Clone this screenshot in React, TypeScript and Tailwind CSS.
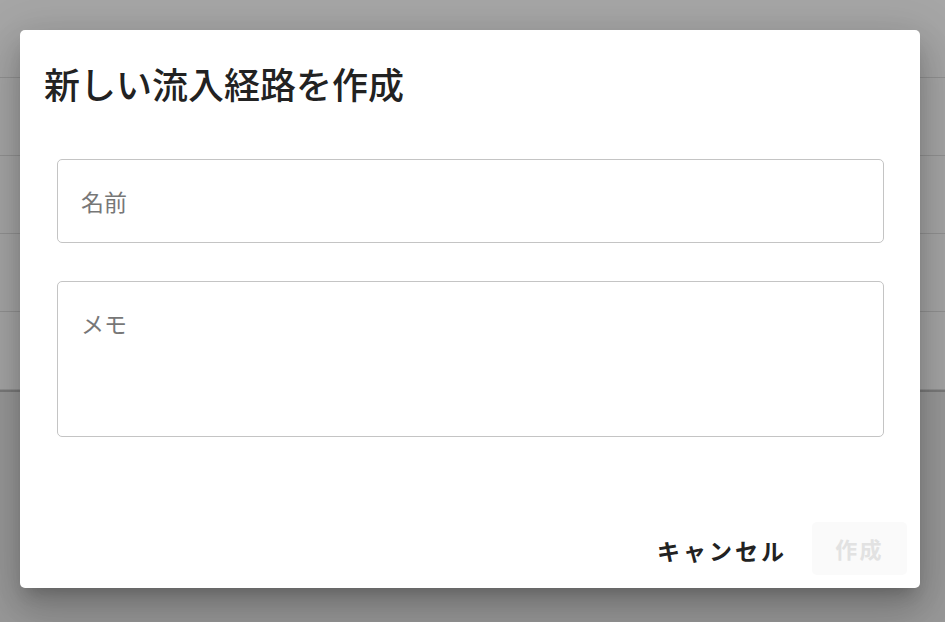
import React from "react";

export default function App() {
  const rows = [0, 1, 2, 3, 4];
  return (
    <div
      className="relative h-[622px] w-[945px] overflow-hidden bg-[#ececec]"
      style={{ fontFamily: '"Noto Sans CJK JP", "Noto Sans", sans-serif' }}
    >
      {/* underlying page */}
      <div className="flex flex-col bg-white">
        {rows.map((r) => (
          <div key={r} className="h-[78px] border-b border-[#e0e0e0]" />
        ))}
        <div className="h-[2px] bg-[#bdbdbd]" />
      </div>

      {/* backdrop */}
      <div className="absolute inset-0 bg-black/[0.35]" />

      {/* dialog */}
      <div className="absolute left-[20px] top-[30px] flex h-[558px] w-[900px] flex-col rounded-[5px] bg-white shadow-[0px_11px_15px_-7px_rgba(0,0,0,0.2),0px_24px_38px_3px_rgba(0,0,0,0.14),0px_9px_46px_8px_rgba(0,0,0,0.12)]">
        <h2 className="px-6 pt-[26px] text-[36px] font-medium leading-[54px] text-[#222]">
          新しい流入経路を作成
        </h2>
        <div className="flex flex-col gap-[38px] pl-[37px] pr-[36px] pt-[49px]">
          <div className="flex h-[84px] items-center rounded-[5px] border border-[#c4c4c4] px-[23px]">
            <span className="text-[23px] text-[#777]">名前</span>
          </div>
          <div className="h-[156px] rounded-[5px] border border-[#c4c4c4] px-[23px] pt-[24px]">
            <span className="text-[23px] leading-[34px] text-[#777]">メモ</span>
          </div>
        </div>
        <div className="mt-auto flex items-center justify-end gap-[13px] pb-[13px] pr-[13px]">
          <button className="flex h-[53px] items-center pl-[15px] pr-[12px] pt-[3px] text-[23px] font-bold tracking-[0.13em] text-[#222]">
            キャンセル
          </button>
          <button className="flex h-[53px] w-[95px] items-center justify-center rounded-[5px] bg-[#fafafa] text-[22px] font-bold tracking-[0.1em] text-[#e2e2e2]">
            作成
          </button>
        </div>
      </div>
    </div>
  );
}
